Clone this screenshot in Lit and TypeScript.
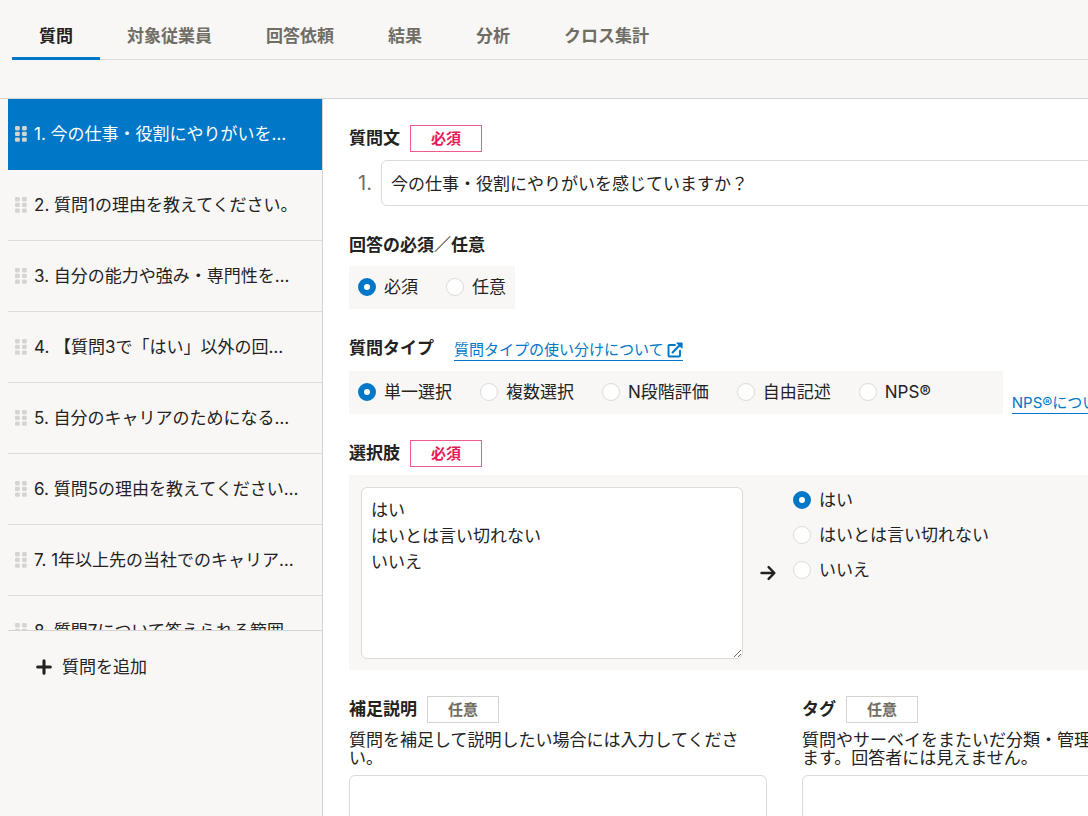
import { LitElement, html, css, svg } from "lit";
import { customElement, property, state } from "lit/decorators.js";

const gripIcon = html`<svg class="grip" viewBox="0 0 12 16" width="12" height="16" aria-hidden="true">
  ${[0, 5.7, 11.4].map((y) =>
    [0, 7].map((x) => svg`<rect x=${x} y=${y} width="4.8" height="4.4" rx="1.3" fill="currentColor"></rect>`)
  )}
</svg>`;

const plusIcon = html`<svg viewBox="0 0 16 16" width="16" height="16" aria-hidden="true">
  <path d="M8 1.7V14.3M1.7 8H14.3" fill="none" stroke="currentColor" stroke-width="3.1" stroke-linecap="round" />
</svg>`;

const arrowIcon = html`<svg class="arrow" viewBox="0 0 18 18" width="18" height="18" aria-hidden="true">
  <path
    d="M2.5 9H15M9.6 3.1L15.4 9L9.6 14.9"
    fill="none"
    stroke="currentColor"
    stroke-width="2.4"
    stroke-linecap="round"
    stroke-linejoin="round"
  />
</svg>`;

const externalIcon = html`<svg viewBox="0 0 16 16" width="16" height="16" aria-hidden="true">
  <path
    d="M8 3H2.6Q1.5 3 1.5 4.1V13.4Q1.5 14.5 2.6 14.5H11.9Q13 14.5 13 13.4V8.6"
    fill="none"
    stroke="currentColor"
    stroke-width="1.9"
    stroke-linecap="round"
  />
  <path d="M5.6 10.4L13.4 2.6" fill="none" stroke="currentColor" stroke-width="2.1" stroke-linecap="round" />
  <path d="M10 .4H15Q15.6 .4 15.6 1V6Q15.4 6.8 14.7 6.3L9.7 1.4Q9.3 .6 10 .4Z" fill="currentColor" />
</svg>`;

@customElement("radio-group")
class RadioGroup extends LitElement {
  @property() name = "";
  @property() label = "";
  @property({ type: Array }) options: string[] = [];
  @property({ type: Boolean, reflect: true }) vertical = false;
  @state() private selected = 0;

  static styles = css`
    :host {
      display: block;
    }
    .group {
      display: flex;
      gap: 28px;
    }
    :host([vertical]) .group {
      flex-direction: column;
      gap: 9px;
    }
    .option {
      display: flex;
      align-items: center;
      gap: 8px;
      line-height: 26px;
      white-space: nowrap;
      cursor: pointer;
    }
    .radio {
      appearance: none;
      box-sizing: border-box;
      width: 18px;
      height: 18px;
      margin: 0;
      border: 1px solid #dedbd8;
      border-radius: 50%;
      background: #fff;
    }
    .radio:checked {
      border: 6px solid #0077c7;
    }
  `;

  render() {
    return html`<div class="group" role="radiogroup" aria-label=${this.label}>
      ${this.options.map(
        (option, i) => html`<label class="option">
          <input
            class="radio"
            type="radio"
            name=${this.name}
            .checked=${i === this.selected}
            @change=${() => (this.selected = i)}
          />
          <span>${option}</span>
        </label>`
      )}
    </div>`;
  }
}

@customElement("app-root")
class AppRoot extends LitElement {
  @state() private tab = 0;
  @state() private current = 0;
  @state() private choices = "はい\nはいとは言い切れない\nいいえ";

  private tabs = ["質問", "対象従業員", "回答依頼", "結果", "分析", "クロス集計"];

  private questions = [
    "今の仕事・役割にやりがいを…",
    "質問1の理由を教えてください。",
    "自分の能力や強み・専門性を…",
    "【質問3で「はい」以外の回…",
    "自分のキャリアのためになる…",
    "質問5の理由を教えてください…",
    "1年以上先の当社でのキャリア…",
    "質問7について答えられる範囲…",
  ];

  static styles = css`
    :host {
      display: flex;
      flex-direction: column;
      height: 100vh;
      overflow: hidden;
      background: #f8f7f6;
      color: #23221e;
      font-family: Inter, "Noto Sans CJK JP", sans-serif;
      font-size: 17px;
      line-height: 26px;
    }
    * {
      box-sizing: border-box;
    }
    button,
    input,
    textarea {
      font: inherit;
      color: inherit;
    }
    .header {
      flex: none;
      padding: 0 0 38px 12px;
      border-bottom: 1px solid #d6d3d0;
    }
    .tabs {
      display: flex;
      box-shadow: inset 0 -1px #dddad7;
    }
    .tab {
      padding: 16px 27px 0;
      border: 0;
      border-bottom: 3px solid transparent;
      background: none;
      color: #706d65;
      font-weight: 700;
      line-height: 41px;
      white-space: nowrap;
      cursor: pointer;
    }
    .tab[aria-selected="true"] {
      border-color: #0077c7;
      color: #23221e;
    }
    .body {
      flex: 1;
      display: flex;
      min-height: 0;
    }
    .sidebar {
      flex: none;
      width: 323px;
      padding-left: 8px;
      border-right: 1px solid #d6d3d0;
    }
    .questions {
      height: calc(100vh - 284px);
      margin: 0;
      padding: 0;
      border-bottom: 1px solid #d6d3d0;
      list-style: none;
      overflow: auto;
      scrollbar-width: none;
    }
    .question {
      display: flex;
      align-items: center;
      gap: 7px;
      width: 100%;
      height: 71px;
      padding: 0 7px;
      border: 0;
      border-bottom: 1px solid #dddad7;
      background: none;
      text-align: left;
      white-space: nowrap;
      cursor: pointer;
    }
    .question[aria-current="true"] {
      border-color: #0077c7;
      background: #0077c7;
      color: #fff;
    }
    .grip {
      flex: none;
      color: #d6d3d0;
    }
    .add {
      display: flex;
      align-items: center;
      gap: 10px;
      padding: 23px 28px;
      border: 0;
      background: none;
      cursor: pointer;
    }
    .main {
      flex: 1;
      min-width: 0;
      padding: 26px;
      background: #fff;
      overflow: auto;
      scrollbar-width: none;
    }
    .form {
      display: flex;
      flex-direction: column;
      gap: 26px;
      min-width: 871px;
    }
    .field {
      display: flex;
      flex-direction: column;
      gap: 8px;
    }
    .heading {
      display: flex;
      align-items: flex-start;
      gap: 10px;
      min-height: 26px;
    }
    .title {
      font-family: "Noto Sans CJK JP", sans-serif;
      font-weight: 700;
      line-height: 24px;
    }
    .badge {
      width: 72px;
      border: 1px solid #d6d3d0;
      color: #706d65;
      font-size: 15px;
      font-weight: 700;
      line-height: 25px;
      text-align: center;
    }
    .required {
      border-color: #ee5c8d;
      color: #e5195a;
    }
    .heading-link {
      gap: 20px;
      height: 28px;
    }
    .heading-link .link {
      margin-top: 5px;
    }
    .link {
      display: inline-flex;
      align-items: center;
      gap: 3px;
      border-bottom: 1px solid #0077c7;
      color: #0077c7;
      font-size: 15px;
      line-height: 20px;
      text-decoration: none;
      white-space: nowrap;
    }
    .numbered {
      display: flex;
      align-items: center;
      gap: 9px;
      padding-left: 9px;
    }
    .number {
      color: #706d65;
      font-size: 20px;
    }
    .box {
      width: 100%;
      height: 46px;
      padding: 8px 9px 10px;
      border: 1px solid #dddad7;
      border-radius: 6px;
      background: #fff;
    }
    .choice-row {
      display: flex;
      align-items: flex-end;
      gap: 9px;
    }
    .options {
      padding: 8px 9px 9px;
      background: #f8f7f6;
    }
    .wide {
      padding-right: 72px;
    }
    .start {
      align-self: flex-start;
    }
    .panel {
      display: flex;
      gap: 16px;
      padding: 12px 12px 11px;
      background: #f8f7f6;
    }
    .arrow {
      flex: none;
      align-self: center;
    }
    .choices {
      width: 382px;
      height: 172px;
      padding: 9px;
      resize: vertical;
      display: block;
    }
    .columns {
      display: grid;
      grid-template-columns: 1fr 1fr;
      gap: 35px;
    }
    .help {
      margin: 0;
      padding-right: 16px;
      line-height: 18px;
    }
    .note {
      display: block;
      height: 120px;
      resize: vertical;
    }
  `;

  private badge(required: boolean) {
    return html`<span class="badge ${required ? "required" : ""}">${required ? "必須" : "任意"}</span>`;
  }

  render() {
    return html`
      <header class="header">
        <div class="tabs" role="tablist">
          ${this.tabs.map(
            (name, i) => html`<button
              class="tab"
              role="tab"
              aria-selected=${i === this.tab ? "true" : "false"}
              @click=${() => (this.tab = i)}
            >${name}</button>`
          )}
        </div>
      </header>
      <div class="body">
        <nav class="sidebar" aria-label="質問">
          <ol class="questions">
            ${this.questions.map(
              (text, i) => html`<li>
                <button
                  class="question"
                  aria-current=${i === this.current ? "true" : "false"}
                  @click=${() => (this.current = i)}
                >
                  ${gripIcon}<span>${i + 1}. ${text}</span>
                </button>
              </li>`
            )}
          </ol>
          <button class="add">${plusIcon}<span>質問を追加</span></button>
        </nav>
        <main class="main">
          <form class="form" @submit=${(e: Event) => e.preventDefault()}>
            <div class="field">
              <div class="heading"><label class="title" for="question">質問文</label>${this.badge(true)}</div>
              <div class="numbered">
                <span class="number">1.</span>
                <input class="box" id="question" type="text" value="今の仕事・役割にやりがいを感じていますか？" />
              </div>
            </div>
            <div class="field">
              <div class="heading"><span class="title">回答の必須／任意</span></div>
              <radio-group
                class="options start"
                name="required"
                label="回答の必須／任意"
                .options=${["必須", "任意"]}
              ></radio-group>
            </div>
            <div class="field">
              <div class="heading heading-link">
                <span class="title">質問タイプ</span>
                <a class="link" href="#types">質問タイプの使い分けについて${externalIcon}</a>
              </div>
              <div class="choice-row">
                <radio-group
                  class="options wide"
                  name="type"
                  label="質問タイプ"
                  .options=${["単一選択", "複数選択", "N段階評価", "自由記述", "NPS®"]}
                ></radio-group>
                <a class="link" href="#nps">NPS®について${externalIcon}</a>
              </div>
            </div>
            <div class="field">
              <div class="heading"><label class="title" for="choices">選択肢</label>${this.badge(true)}</div>
              <div class="panel">
                <textarea
                  class="box choices"
                  id="choices"
                  .value=${this.choices}
                  @input=${(e: Event) => (this.choices = (e.target as HTMLTextAreaElement).value)}
                ></textarea>
                ${arrowIcon}
                <radio-group
                  vertical
                  name="preview"
                  label="選択肢"
                  .options=${this.choices.split("\n").filter(Boolean)}
                ></radio-group>
              </div>
            </div>
            <div class="columns">
              <div class="field">
                <div class="heading"><label class="title" for="note">補足説明</label>${this.badge(false)}</div>
                <p class="help">質問を補足して説明したい場合には入力してください。</p>
                <textarea class="box note" id="note"></textarea>
              </div>
              <div class="field">
                <div class="heading"><label class="title" for="tag">タグ</label>${this.badge(false)}</div>
                <p class="help">質問やサーベイをまたいだ分類・管理に役立てられます。回答者には見えません。</p>
                <input class="box" id="tag" type="text" />
              </div>
            </div>
          </form>
        </main>
      </div>
    `;
  }
}
